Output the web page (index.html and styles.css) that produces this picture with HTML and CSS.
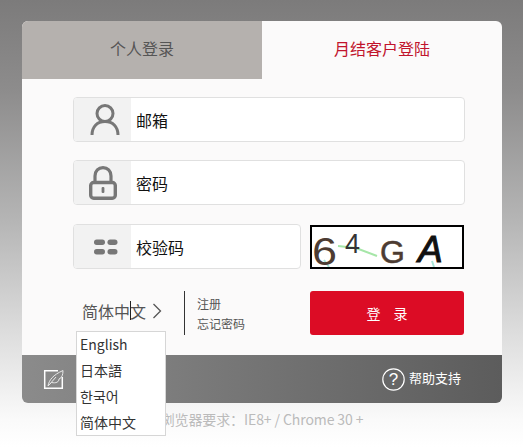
FILE: index.html
```html
<!DOCTYPE html>
<html lang="zh">
<head>
<meta charset="utf-8">
<title>登录</title>
<link rel="stylesheet" href="styles.css">
</head>
<body>
<main class="card">
  <div class="tabs">
    <div class="tab tab-off">个人登录</div>
    <div class="tab tab-on">月结客户登陆</div>
  </div>
  <form class="form">
    <div class="field">
      <span class="ico"><svg class="ico-person" width="30" height="33" viewBox="0 0 30 33"><circle cx="15" cy="10.500" r="8" fill="none" stroke="#777" stroke-width="3"/><path d="M2 32c0-8 5-13.500 13-13.500S28 24 28 32" fill="none" stroke="#777" stroke-width="3"/></svg></span>
      <span class="val">邮箱</span>
    </div>
    <div class="field">
      <span class="ico"><svg width="28" height="34" viewBox="0 0 28 34"><path d="M6 17V10C6 5 9.500 1.700 14 1.700S22 5 22 10v7" fill="none" stroke="#777" stroke-width="3.200"/><rect x="1.700" y="16.500" width="24.600" height="15.800" rx="3" fill="none" stroke="#777" stroke-width="3.400"/><rect x="12.600" y="21" width="2.800" height="6" rx="1" fill="#777"/></svg></span>
      <span class="val">密码</span>
    </div>
    <div class="captcha-row">
      <div class="field field-short">
        <span class="ico"><svg class="ico-code" width="24" height="16" viewBox="0 0 24 16"><rect x="0" y="0.500" width="11" height="5.500" rx="2.700" fill="#777"/><rect x="13.500" y="0.500" width="10" height="5.500" rx="2.700" fill="#777"/><rect x="0" y="10" width="11" height="5.500" rx="2.700" fill="#777"/><rect x="13.500" y="10" width="10" height="5.500" rx="2.700" fill="#777"/></svg></span>
        <span class="val">校验码</span>
      </div>
      <svg class="captcha" width="154" height="44" viewBox="0 0 154 44">
        <rect x="1" y="1" width="152" height="42" fill="#fff"/>
        <path d="M28 21l18 2 21 8" fill="none" stroke="#a6e6a8" stroke-width="2"/>
        <path d="M14 35l5 7M122 36l2 6" fill="none" stroke="#a8e6d8" stroke-width="2"/>
        <text x="2" y="40" class="c1" textLength="25" lengthAdjust="spacingAndGlyphs">6</text>
        <text x="35" y="28" class="c2">4</text>
        <text x="70" y="38" class="c4">G</text>
        <text x="108" y="37" class="c3">A</text>
        <rect x="1" y="1" width="152" height="42" fill="none" stroke="#000" stroke-width="2"/>
      </svg>
    </div>
    <div class="action-row">
      <div class="lang"><span class="lang-text">简体中文</span><svg class="chev" width="10" height="16" viewBox="0 0 10 16"><path d="M1.500 1l7 7-7 7" fill="none" stroke="#555" stroke-width="1.300"/></svg><i class="caret"></i></div>
      <div class="links"><a>注册</a><a>忘记密码</a></div>
      <button type="button" class="login">登 录</button>
    </div>
  </form>
  <footer class="foot">
    <svg width="22" height="21" viewBox="0 0 22 21"><path d="M15 1.700H1.700v17.600h17.600V8" fill="none" stroke="#fff" stroke-width="1.500"/><path d="M5 17c1-6 5-11 15-15.500 0 4-1 7.500-4 8.500 0 3-3 4.500-7.500 3.500L5 17zM6 16l7-8" fill="none" stroke="#e8e8e8" stroke-width="1"/></svg>
    <div class="help"><svg width="23" height="23" viewBox="0 0 23 23"><circle cx="11.500" cy="11.500" r="10.700" fill="none" stroke="#fff" stroke-width="1.200"/><text x="11.500" y="17" class="q">?</text></svg><span class="help-text">帮助支持</span></div>
  </footer>
</main>
<p class="tip">浏览器要求：IE8+ / Chrome 30 +</p>
<ul class="menu">
  <li>English</li>
  <li>日本語</li>
  <li lang="ko">한국어</li>
  <li>简体中文</li>
</ul>
</body>
</html>
```
FILE: styles.css
```css
* { box-sizing: border-box; }
html, body { margin: 0; height: 447px; overflow: hidden; }
body {
  position: relative;
  padding: 21px 21px 0 22px;
  background: linear-gradient(180deg, #7c7b7b 0, #8d8c8c 90px, #b5b5b5 220px, #dcdcdc 330px, #fafafa 420px, #fff 447px);
  font-family: "Noto Sans CJK SC", "Noto Sans", sans-serif;
  color: #222;
}
.card { width: 480px; height: 382px; background: #fbfafa; border-radius: 6px; overflow: hidden; display: flex; flex-direction: column; }
.tabs { display: flex; height: 58px; }
.tab { flex: 1; display: flex; align-items: center; justify-content: center; font-size: 16px; padding-bottom: 4px; }
.tab-off { background: #b5b1ae; color: #555; }
.tab-on { color: #c1142c; }
.form { flex: 1; padding: 18px 37px 0 51px; }
.field { height: 45px; display: flex; border: 1px solid #e0e0e0; border-radius: 4px; background: #fff; overflow: hidden; margin-bottom: 18px; }
.ico { width: 57px; background: #f2f2f2; display: flex; align-items: center; justify-content: center; flex: none; }
.ico-person { margin-left: 5px; }
.ico-code { margin-left: 6px; }
.val { padding-left: 5px; line-height: 44px; font-size: 16px; color: #111; }
.captcha-row { display: flex; gap: 9px; margin-top: 19px; }
.field-short { width: 228px; margin-bottom: 0; }
.captcha { display: block; margin-top: 1px; overflow: visible; }
.c1 { font: 39px "Liberation Sans", sans-serif; fill: #4d3c32; }
.c2 { font: 27px "Liberation Sans", sans-serif; fill: #333; }
.c4 { font: 32px "Liberation Sans", sans-serif; fill: #4d3c32; stroke: #4d3c32; stroke-width: 0.5px; }
.c3 { font: italic 37px "Liberation Sans", sans-serif; fill: #111; stroke: #111; stroke-width: 1px; }
.action-row { display: flex; margin-top: 22px; height: 44px; align-items: stretch; }
.lang { position: relative; width: 112px; padding: 0 0 4px 9px; display: flex; align-items: center; font-size: 16px; color: #555; border-right: 1px solid #333; }
.chev { margin-left: 6px; }
.caret { position: absolute; left: 57px; top: 10px; width: 1px; height: 19px; background: #222; }
.links { width: 125px; padding: 3px 0 0 12px; display: flex; flex-direction: column; font-size: 12px; line-height: 20px; color: #555; }
.login { width: 154px; border: 0; border-radius: 3px; background: #dc0c25; color: #fff; font: 14px/1 "Noto Sans CJK SC", sans-serif; word-spacing: 10px; }
.foot { height: 48px; display: flex; align-items: center; justify-content: space-between; padding: 0 41px 0 21px; background: linear-gradient(90deg, #8b8b8b 0, #5c5c5c 100%); }
.help { display: flex; align-items: center; gap: 4px; color: #fff; font-size: 13px; }
.help-text { padding-bottom: 4px; }
.help svg, .foot > svg { display: block; }
.q { font: 17px "Liberation Sans", sans-serif; fill: #fff; text-anchor: middle; }
.tip { margin: 6px 0 0; text-align: center; font-size: 14px; color: #bbb; line-height: 20px; width: 480px; letter-spacing: -0.1px; }
.menu { position: absolute; left: 76px; top: 331px; width: 90px; height: 105px; margin: 0; padding: 0 0 0 3px; list-style: none; background: #fff; border: 1px solid #d6d6d6; font-size: 14px; color: #333; }
.menu li { height: 26px; line-height: 24px; }
```
